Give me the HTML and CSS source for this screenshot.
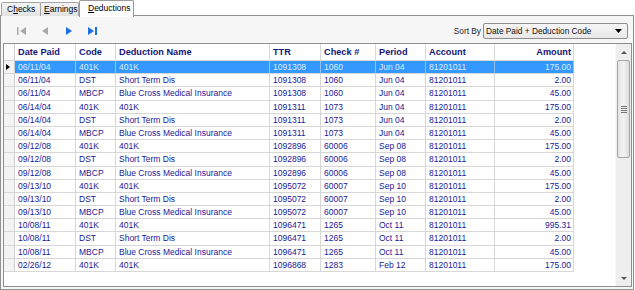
FILE: index.html
```html
<!DOCTYPE html>
<html>
<head>
  <link rel="stylesheet" href="styles.css">
</head>
<body>
  <div class="tabs">
    <div class="tab checks">C<u>h</u>ecks</div>
    <div class="tab earnings"><u>E</u>arnings</div>
    <div class="tab active"><u>D</u>eductions</div>
  </div>

  <div class="panel">
    <div class="toolbar">
      <div class="nav">
        <svg class="nav-btn" width="10" height="8" viewBox="0 0 10 8"><rect x="0" y="0" width="1.5" height="8" fill="#a9a9a9"/><polygon points="9,0 9,8 3,4" fill="#a9a9a9"/></svg>
        <svg class="nav-btn" width="7" height="8" viewBox="0 0 7 8"><polygon points="6,0 6,8 0,4" fill="#a9a9a9"/></svg>
        <svg class="nav-btn" width="8" height="8" viewBox="0 0 8 8"><polygon points="1,0 1,8 7,4" fill="#1c6fe0"/></svg>
        <svg class="nav-btn" width="10" height="8" viewBox="0 0 10 8"><polygon points="0,0 0,8 6,4" fill="#1c6fe0"/><rect x="7" y="0" width="2" height="8" fill="#1c6fe0"/></svg>
      </div>
      <div class="sort">
        <span class="sort-label">Sort By</span>
        <div class="combo">
          <span>Date Paid + Deduction Code</span>
          <svg width="7" height="4" viewBox="0 0 7 4"><polygon points="0,0 7,0 3.5,4" fill="#000"/></svg>
        </div>
      </div>
    </div>

    <div class="grid">
      <div class="table">
        <div class="row head">
          <div class="rh"></div>
          <div>Date Paid</div><div>Code</div><div>Deduction Name</div><div>TTR</div>
          <div>Check #</div><div>Period</div><div>Account</div><div class="num">Amount</div>
        </div>
        <div class="row selected">
          <div class="rh"><span class="pointer"></span></div>
          <div>06/11/04</div><div>401K</div><div>401K</div><div>1091308</div>
          <div>1060</div><div>Jun 04</div><div>81201011</div><div class="num">175.00</div>
        </div>
        <div class="row">
          <div class="rh"></div>
          <div>06/11/04</div><div>DST</div><div>Short Term Dis</div><div>1091308</div>
          <div>1060</div><div>Jun 04</div><div>81201011</div><div class="num">2.00</div>
        </div>
        <div class="row">
          <div class="rh"></div>
          <div>06/11/04</div><div>MBCP</div><div>Blue Cross Medical Insurance</div><div>1091308</div>
          <div>1060</div><div>Jun 04</div><div>81201011</div><div class="num">45.00</div>
        </div>
        <div class="row">
          <div class="rh"></div>
          <div>06/14/04</div><div>401K</div><div>401K</div><div>1091311</div>
          <div>1073</div><div>Jun 04</div><div>81201011</div><div class="num">175.00</div>
        </div>
        <div class="row">
          <div class="rh"></div>
          <div>06/14/04</div><div>DST</div><div>Short Term Dis</div><div>1091311</div>
          <div>1073</div><div>Jun 04</div><div>81201011</div><div class="num">2.00</div>
        </div>
        <div class="row">
          <div class="rh"></div>
          <div>06/14/04</div><div>MBCP</div><div>Blue Cross Medical Insurance</div><div>1091311</div>
          <div>1073</div><div>Jun 04</div><div>81201011</div><div class="num">45.00</div>
        </div>
        <div class="row">
          <div class="rh"></div>
          <div>09/12/08</div><div>401K</div><div>401K</div><div>1092896</div>
          <div>60006</div><div>Sep 08</div><div>81201011</div><div class="num">175.00</div>
        </div>
        <div class="row">
          <div class="rh"></div>
          <div>09/12/08</div><div>DST</div><div>Short Term Dis</div><div>1092896</div>
          <div>60006</div><div>Sep 08</div><div>81201011</div><div class="num">2.00</div>
        </div>
        <div class="row">
          <div class="rh"></div>
          <div>09/12/08</div><div>MBCP</div><div>Blue Cross Medical Insurance</div><div>1092896</div>
          <div>60006</div><div>Sep 08</div><div>81201011</div><div class="num">45.00</div>
        </div>
        <div class="row">
          <div class="rh"></div>
          <div>09/13/10</div><div>401K</div><div>401K</div><div>1095072</div>
          <div>60007</div><div>Sep 10</div><div>81201011</div><div class="num">175.00</div>
        </div>
        <div class="row">
          <div class="rh"></div>
          <div>09/13/10</div><div>DST</div><div>Short Term Dis</div><div>1095072</div>
          <div>60007</div><div>Sep 10</div><div>81201011</div><div class="num">2.00</div>
        </div>
        <div class="row">
          <div class="rh"></div>
          <div>09/13/10</div><div>MBCP</div><div>Blue Cross Medical Insurance</div><div>1095072</div>
          <div>60007</div><div>Sep 10</div><div>81201011</div><div class="num">45.00</div>
        </div>
        <div class="row">
          <div class="rh"></div>
          <div>10/08/11</div><div>401K</div><div>401K</div><div>1096471</div>
          <div>1265</div><div>Oct 11</div><div>81201011</div><div class="num">995.31</div>
        </div>
        <div class="row">
          <div class="rh"></div>
          <div>10/08/11</div><div>DST</div><div>Short Term Dis</div><div>1096471</div>
          <div>1265</div><div>Oct 11</div><div>81201011</div><div class="num">2.00</div>
        </div>
        <div class="row">
          <div class="rh"></div>
          <div>10/08/11</div><div>MBCP</div><div>Blue Cross Medical Insurance</div><div>1096471</div>
          <div>1265</div><div>Oct 11</div><div>81201011</div><div class="num">45.00</div>
        </div>
        <div class="row">
          <div class="rh"></div>
          <div>02/26/12</div><div>401K</div><div>401K</div><div>1096868</div>
          <div>1283</div><div>Feb 12</div><div>81201011</div><div class="num">175.00</div>
        </div>
      </div>

      <div class="scrollbar">
        <div class="arrow up"></div>
        <div class="track">
          <div class="thumb"><span></span><span></span><span></span><span></span></div>
        </div>
        <div class="arrow down"></div>
      </div>
    </div>
  </div>
</body>
</html>
```

FILE: styles.css
```css
body {
  margin: 0;
  background-color: #ffffff;
  font-family: "Liberation Sans", Arial, sans-serif;
  font-size: 8.5px;
  color: #000;
}

/* tab strip */
.tabs {
  display: flex;
  align-items: flex-end;
  height: 16px;
  padding-left: 1px;
  position: relative;
  z-index: 2;
}
.tab {
  box-sizing: border-box;
  height: 14px;
  line-height: 13px;
  border: 1px solid #a4a4a4;
  border-bottom: none;
  border-radius: 2px 2px 0 0;
  background: linear-gradient(#f4f4f4, #e2e2e2);
  color: #000;
  font-size: 8.5px;
  white-space: nowrap;
}
.tab.checks {
  width: 40px;
  padding-left: 5px;
}
.tab.earnings {
  width: 39px;
  padding-left: 3px;
  margin-left: -1px;
}
.tab.active {
  width: 55px;
  height: 17px;
  line-height: 15px;
  padding-left: 8px;
  margin-left: 0;
  background: #ffffff;
  border-color: #9a9a9a;
  margin-bottom: -1px;
}

/* panel */
.panel {
  height: 271px;
  margin-top: -1px;
  margin-right: 1px;
  border: 1px solid #919191;
  background-color: #f6f6f6;
  display: flex;
  flex-direction: column;
  padding: 0 1px 2px 2px;
}

.toolbar {
  height: 27px;
  display: flex;
  align-items: center;
  justify-content: space-between;
  padding-right: 4px;
}
.nav {
  display: flex;
  align-items: center;
  padding-left: 14px;
  padding-top: 2px;
}
.nav-btn {
  margin-right: 15px;
}
.nav-btn:nth-child(2) { margin-right: 16px; }

.sort {
  display: flex;
  align-items: center;
  gap: 2px;
  padding-top: 2px;
}
.sort-label {
  color: #222;
  font-size: 8.3px;
}
.combo {
  width: 136px;
  height: 14px;
  border: 1px solid #8e8e8e;
  border-radius: 2px;
  background: linear-gradient(#f6f6f6, #e8e8e8);
  display: flex;
  align-items: center;
  justify-content: space-between;
  padding: 0 5px 0 2px;
  color: #111;
  font-size: 8.3px;
}

/* data grid */
.grid {
  flex: 1;
  display: flex;
  border: 1px solid #8f8f8f;
  background-color: #ffffff;
}
.table {
  flex: 1;
}
.row {
  display: grid;
  grid-template-columns: 11px 61px 40px 154px 51px 55px 50px 69px 79px;
  height: 13.2px;
  line-height: 12px;
  color: #20209a;
}
.row > div {
  border-right: 1px solid #d7d7d7;
  border-bottom: 1px solid #d7d7d7;
  padding-left: 3px;
  white-space: nowrap;
  overflow: hidden;
}
.row > .num {
  text-align: right;
  padding: 0 2px 0 0;
}
.row > .rh {
  padding: 0;
  background-color: #f3f3f3;
  border-right-color: #d0d0d0;
  position: relative;
}
.row.head {
  height: 17px;
  line-height: 16px;
  font-weight: bold;
  font-size: 9.2px;
  color: #161678;
}
.row.head > .rh {
  background-color: #fafafa;
}
.row.selected > div {
  background-color: #3399ff;
  color: #dbe9ff;
  border-right-color: #8fc2f5;
}
.row.selected > .rh {
  background-color: #f3f3f3;
  border-right-color: #d0d0d0;
}
.pointer {
  position: absolute;
  left: 2px;
  top: 3px;
  width: 0;
  height: 0;
  border-top: 3.5px solid transparent;
  border-bottom: 3.5px solid transparent;
  border-left: 4px solid #000;
}

.scrollbar {
  width: 15px;
  display: flex;
  flex-direction: column;
  background-color: #eeeeee;
  border-left: 1px solid #f8f8f8;
}
.arrow {
  height: 16px;
  display: flex;
  align-items: center;
  justify-content: center;
}
.arrow::after {
  content: "";
  border-left: 3px solid transparent;
  border-right: 3px solid transparent;
}
.arrow.up::after {
  border-bottom: 3px solid #555;
}
.arrow.down::after {
  border-top: 3px solid #555;
}
.track {
  flex: 1;
}
.thumb {
  height: 96px;
  margin: 0 1px;
  border: 1px solid #a6a6a6;
  border-radius: 2px;
  background: linear-gradient(to right, #e4e4e4, #f3f3f3 50%, #dcdcdc);
  display: flex;
  flex-direction: column;
  align-items: center;
  justify-content: center;
  gap: 1px;
}
.thumb span {
  width: 6px;
  height: 1px;
  background-color: #777;
}
```
